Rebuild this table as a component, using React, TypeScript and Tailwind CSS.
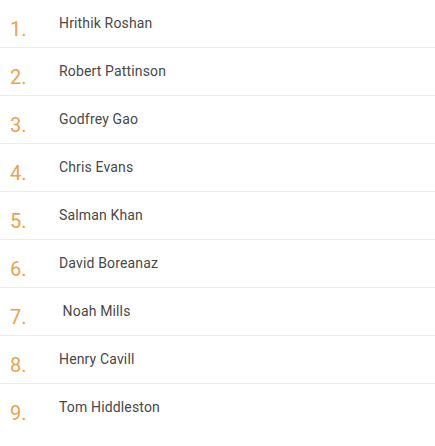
import React from 'react';

const actors = [
  'Hrithik Roshan',
  'Robert Pattinson',
  'Godfrey Gao',
  'Chris Evans',
  'Salman Khan',
  'David Boreanaz',
  '\u00a0Noah Mills',
  'Henry Cavill',
  'Tom Hiddleston'
];

export default function App() {
  return (
    <div className="w-[435px] h-[446px] bg-white font-['Roboto',sans-serif]">
      <ul>
        {actors.map((name, i) => (
          <li
            key={i}
            className={`flex h-12 ${i < actors.length - 1 ? 'border-b border-[#ececec]' : ''}`}
          >
            <span className="w-[59px] pl-[10px] pt-[17px] text-[20px] leading-[24px] text-[#e9a24f]">
              {i + 1}.
            </span>
            <span className="pt-[13px] text-[14px] leading-[20px] tracking-[0.15px] text-[#484848]">
              {name}
            </span>
          </li>
        ))}
      </ul>
    </div>
  );
}
